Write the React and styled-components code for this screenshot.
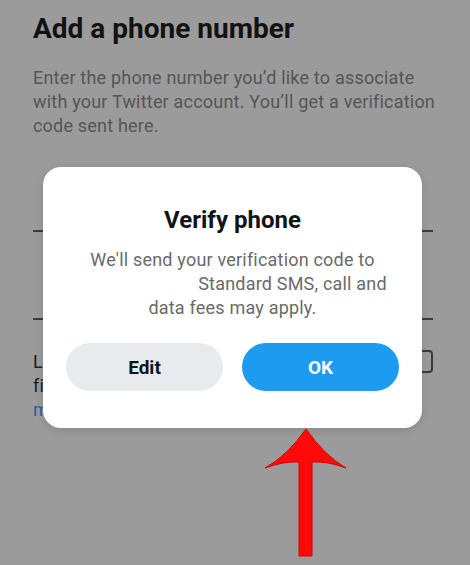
import React from "react";
import styled, { createGlobalStyle } from "styled-components";

const Global = createGlobalStyle`
  html, body { margin: 0; padding: 0; }
  body {
    background: #9b9b9b;
    font-family: Roboto, "Noto Sans", "Liberation Sans", sans-serif;
    width: 470px;
    height: 565px;
    overflow: hidden;
  }
`;

const Page = styled.main`
  position: relative;
  width: 470px;
  height: 565px;
  box-sizing: border-box;
  padding: 13px 37px 0 33px;
  background: #9b9b9b;
`;

const Heading = styled.h1`
  margin: 0;
  font-size: 28px;
  line-height: 32px;
  font-weight: 700;
  color: #121212;
`;

const Lead = styled.p`
  margin: 21px 0 0;
  font-size: 18px;
  line-height: 24px;
  letter-spacing: 0.2px;
  color: #555;
  white-space: nowrap;
`;

const Field = styled.div`
  height: 88px;
  border-bottom: 2px solid #3c3c3c;
  box-sizing: border-box;
  margin-top: ${(p) => p.$top || 0}px;
`;

const CheckRow = styled.div`
  margin-top: 30px;
  display: flex;
  align-items: flex-start;
  justify-content: space-between;
`;

const CheckText = styled.p`
  margin: 0;
  font-size: 18px;
  line-height: 24px;
  letter-spacing: 0.2px;
  color: #1e1e1e;
  white-space: nowrap;
`;

const Link = styled.span`
  color: #2d5f8c;
`;

const Box = styled.span`
  width: 22px;
  height: 23px;
  box-sizing: border-box;
  border: 2px solid #3a3a3a;
  border-radius: 4px;
  flex: none;
`;

const Dialog = styled.section`
  position: absolute;
  left: 43px;
  top: 167px;
  width: 379px;
  box-sizing: border-box;
  padding: 39px 23px 37px;
  background: #fff;
  border-radius: 18px;
  box-shadow: 0 2px 10px rgba(0, 0, 0, 0.12);
  display: flex;
  flex-direction: column;
  align-items: center;
`;

const DialogTitle = styled.h2`
  margin: 0;
  font-size: 24px;
  line-height: 28px;
  font-weight: 700;
  color: #0f1419;
`;

const DialogBody = styled.p`
  margin: 14px 0 0;
  font-size: 18px;
  line-height: 24px;
  letter-spacing: 0.2px;
  color: #6a6a6a;
  text-align: center;
  white-space: nowrap;
`;

const Redacted = styled.span`
  display: inline-block;
  width: 120px;
`;

const Actions = styled.div`
  margin-top: 23px;
  width: 100%;
  display: grid;
  grid-template-columns: 1fr 1fr;
  gap: 19px;
`;

const Button = styled.button`
  height: 48px;
  border: none;
  border-radius: 24px;
  font-family: inherit;
  font-size: 19px;
  font-weight: 700;
  background: ${(p) => (p.$primary ? "#1d9bf0" : "#e8ebed")};
  color: ${(p) => (p.$primary ? "#fff" : "#0f1419")};
`;

const ArrowLayer = styled.svg`
  position: absolute;
  left: 0;
  top: 0;
  width: 470px;
  height: 565px;
  pointer-events: none;
`;

export default function App() {
  return (
    <>
      <Global />
      <Page>
        <Heading>Add a phone number</Heading>
        <Lead>
          Enter the phone number you’d like to associate
          <br />
          with your Twitter account. You’ll get a verification
          <br />
          code sent here.
        </Lead>
        <Field $top={6} />
        <Field />
        <CheckRow>
          <CheckText>
            Let others who have your phone number
            <br />
            find and connect with you on Twitter. Learn
            <br />
            <Link>more</Link>
          </CheckText>
          <Box />
        </CheckRow>

        <Dialog>
          <DialogTitle>Verify phone</DialogTitle>
          <DialogBody>
            We'll send your verification code to
            <br />
            <Redacted />
            Standard SMS, call and
            <br />
            data fees may apply.
          </DialogBody>
          <Actions>
            <Button>Edit</Button>
            <Button $primary>OK</Button>
          </Actions>
        </Dialog>

        <ArrowLayer viewBox="0 0 470 565">
          <path
            d="M306 429 Q287 456 265 468 Q284 461 299 462 L299 556 L312 556 L312 462 Q328 461 346 468 Q325 456 306 429 Z"
            fill="#ff0a0a"
            stroke="#d40000"
            strokeWidth="1"
            strokeLinejoin="round"
          />
        </ArrowLayer>
      </Page>
    </>
  );
}
